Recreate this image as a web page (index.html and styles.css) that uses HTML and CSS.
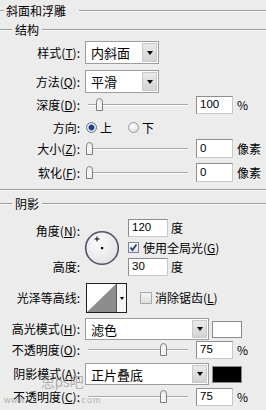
FILE: index.html
```html
<!DOCTYPE html>
<html lang="zh-CN">
<head>
<meta charset="utf-8">
<title>斜面和浮雕</title>
<link rel="stylesheet" href="styles.css">
</head>
<body>
<div class="panel">
  <div class="title"><span class="lead"></span><span class="ttl">斜面和浮雕</span><span class="etch grow tline"></span></div>
  <div class="legend"><span class="etch leadline"></span><span class="lg">结构</span><span class="etch grow"></span></div>

  <div class="row h23 m3"><span class="lbl">样式(<u>T</u>):</span><div class="select narrow"><span class="val">内斜面</span><span class="dd"><i></i></span></div></div>
  <div class="row h23 m6"><span class="lbl">方法(<u>Q</u>):</span><div class="select narrow"><span class="val">平滑</span><span class="dd"><i></i></span></div></div>

  <div class="row h18 m3"><span class="lbl">深度(<u>D</u>):</span>
    <div class="slider"><div class="rail"><span class="trackline"></span><span class="thumb" style="left:10.6%"><svg width="9" height="13" viewBox="0 0 9 13"><path d="M1.5 12.5V4.2Q1.5 0.5 4.5 0.5Q7.5 0.5 7.5 4.2V12.5Z" fill="#f2f2f2" stroke="#7c7c7c"/><path d="M2.5 11.5V4.5" stroke="#fff"/></svg></span></div></div>
    <span class="num">100</span><span class="unit">%</span></div>

  <div class="row h17 m5"><span class="lbl">方向:</span>
    <span class="radio on first"></span><span class="rtext">上</span>
    <span class="radio second"></span><span class="rtext">下</span></div>

  <div class="row h19 m3"><span class="lbl">大小(<u>Z</u>):</span>
    <div class="slider"><div class="rail"><span class="trackline"></span><span class="thumb" style="left:0%"><svg width="9" height="13" viewBox="0 0 9 13"><path d="M1.5 12.5V4.2Q1.5 0.5 4.5 0.5Q7.5 0.5 7.5 4.2V12.5Z" fill="#f2f2f2" stroke="#7c7c7c"/><path d="M2.5 11.5V4.5" stroke="#fff"/></svg></span></div></div>
    <span class="num">0</span><span class="unit">像素</span></div>
  <div class="row h19 m5"><span class="lbl">软化(<u>F</u>):</span>
    <div class="slider"><div class="rail"><span class="trackline"></span><span class="thumb" style="left:0%"><svg width="9" height="13" viewBox="0 0 9 13"><path d="M1.5 12.5V4.2Q1.5 0.5 4.5 0.5Q7.5 0.5 7.5 4.2V12.5Z" fill="#f2f2f2" stroke="#7c7c7c"/><path d="M2.5 11.5V4.5" stroke="#fff"/></svg></span></div></div>
    <span class="num">0</span><span class="unit">像素</span></div>

  <div class="etch sep"></div>

  <div class="legend shadowlg"><span class="etch leadline"></span><span class="lg">阴影</span><span class="etch grow"></span></div>

  <div class="angle">
    <span class="lbl a-r1">角度(<u>N</u>):</span>
    <div class="dial"><svg width="36" height="36" viewBox="0 0 36 36"><defs><radialGradient id="dg" cx="40%" cy="35%" r="70%"><stop offset="0" stop-color="#fbfbfb"/><stop offset="1" stop-color="#e2e2e6"/></radialGradient></defs><circle cx="18" cy="18" r="16.3" fill="url(#dg)" stroke="#4d5566" stroke-width="1.6"/><path d="M13 6.5V11.5M10.5 9H15.5" stroke="#000" stroke-width="1"/><rect x="17" y="17" width="2.2" height="2.2" fill="#000"/></svg></div>
    <div class="a-r1 a-c3"><span class="num wide">120</span><span class="unit deg">度</span></div>
    <div class="a-r2 a-c3 check"><span class="cb on"><svg width="11" height="11" viewBox="0 0 11 11"><path d="M2.5 5.5L4.5 8L8.5 2.5" fill="none" stroke="#1f3c8c" stroke-width="1.8"/></svg></span><span>使用全局光(<u>G</u>)</span></div>
    <span class="lbl a-r3">高度:</span>
    <div class="a-r3 a-c3"><span class="num wide">30</span><span class="unit deg">度</span></div>
  </div>

  <div class="row h30 m7"><span class="lbl">光泽等高线:</span>
    <div class="contour"><svg class="curve" width="29" height="28" viewBox="0 0 29 28"><rect width="29" height="28" fill="#fff"/><polygon points="0,28 29,0 29,28" fill="#8d8d8d"/></svg><span class="cdd"><i></i></span></div>
    <span class="cb plain aa"></span><span class="cbt">消除锯齿(<u>L</u>)</span></div>

  <div class="row h22 m5"><span class="lbl">高光模式(<u>H</u>):</span><div class="select wide"><span class="val">滤色</span><span class="dd"><i></i></span></div><span class="swatch white"></span></div>

  <div class="row h18 m1"><span class="lbl">不透明度(<u>O</u>):</span>
    <div class="slider"><div class="rail"><span class="trackline"></span><span class="thumb" style="left:75%"><svg width="9" height="13" viewBox="0 0 9 13"><path d="M1.5 12.5V4.2Q1.5 0.5 4.5 0.5Q7.5 0.5 7.5 4.2V12.5Z" fill="#f2f2f2" stroke="#7c7c7c"/><path d="M2.5 11.5V4.5" stroke="#fff"/></svg></span></div></div>
    <span class="num">75</span><span class="unit">%</span></div>

  <div class="row h22 m4"><span class="lbl">阴影模式(<u>A</u>):</span><div class="select wide"><span class="val">正片叠底</span><span class="dd"><i></i></span></div><span class="swatch black"></span></div>

  <div class="row h18 m3"><span class="lbl">不透明度(<u>C</u>):</span>
    <div class="slider"><div class="rail"><span class="trackline"></span><span class="thumb" style="left:75%"><svg width="9" height="13" viewBox="0 0 9 13"><path d="M1.5 12.5V4.2Q1.5 0.5 4.5 0.5Q7.5 0.5 7.5 4.2V12.5Z" fill="#f2f2f2" stroke="#7c7c7c"/><path d="M2.5 11.5V4.5" stroke="#fff"/></svg></span></div></div>
    <span class="num">75</span><span class="unit">%</span></div>

  <div class="wm wm1">思ps吧</div>
  <div class="wm wm2">www.</div>
  <div class="wm wm3">.com</div>
</div>
</body>
</html>
```
FILE: styles.css
```css
* { box-sizing: border-box; }
html, body { margin: 0; padding: 0; }
body {
  background: #ececec;
  width: 266px;
  height: 410px;
  overflow: hidden;
  font-family: "Noto Sans CJK SC", "Liberation Sans", sans-serif;
  font-size: 12px;
  line-height: 1;
  color: #000;
}
.panel { position: relative; width: 266px; height: 410px; }
u { text-decoration: underline; text-underline-offset: 1px; }

.etch { display: block; height: 2px; border-top: 1px solid #9b9b9b; border-bottom: 1px solid #fbfbfb; }
.grow { flex: 1; }

.title { display: flex; align-items: center; height: 16px; margin-top: 3px; }
.title .lead { width: 4px; height: 2px; border-top: 1px solid #9b9b9b; border-bottom: 1px solid #fbfbfb; }
.title .ttl { margin-left: 2px; }
.title .tline { margin-left: 13px; }

.legend { display: flex; align-items: center; height: 16px; margin-top: 3px; }
.legend .leadline { width: 12px; }
.legend .lg { margin: 0 3px 0 3px; }
.shadowlg { margin-top: 5px; }

.sep { margin-top: 7px; }

.row { display: flex; align-items: center; }
.h17 { height: 17px; }
.h18 { height: 18px; }
.h19 { height: 19px; }
.h22 { height: 22px; }
.h23 { height: 23px; }
.h30 { height: 30px; }
.m1 { margin-top: 1px; }
.m3 { margin-top: 3px; }
.m4 { margin-top: 4px; }
.m5 { margin-top: 5px; }
.m6 { margin-top: 6px; }
.m7 { margin-top: 7px; }

.lbl { width: 80px; text-align: right; white-space: nowrap; flex: none; }

.select {
  display: flex;
  align-items: stretch;
  height: 100%;
  margin-left: 5px;
  background: #fff;
  border: 1px solid #9d9d9d;
}
.select.narrow { width: 74px; }
.select.wide { width: 124px; }
.select .val { flex: 1; display: flex; align-items: center; padding-left: 5px; font-size: 13px; }
.dd {
  width: 15px;
  margin: 1px;
  background: linear-gradient(#e9e9e9, #d4d4d4);
  border: 1px solid #c9c9c9;
  display: flex;
  align-items: center;
  justify-content: center;
}
.dd i, .cdd i {
  display: block;
  width: 0; height: 0;
  border-left: 3.5px solid transparent;
  border-right: 3.5px solid transparent;
  border-top: 4px solid #000;
}

.slider { position: relative; width: 111px; height: 100%; margin-left: 5px; flex: none; }
.rail { position: absolute; left: 4px; width: 99px; top: 0; bottom: 0; }
.trackline {
  position: absolute; left: -1px; right: 0; top: 50%; margin-top: -1px;
  height: 2px; border-top: 1px solid #a8a8a8; border-bottom: 1px solid #fff;
}
.thumb { position: absolute; top: 50%; margin-top: -7px; margin-left: -4.5px; width: 9px; height: 13px; }
.thumb svg { display: block; }

.num {
  width: 37px;
  height: 100%;
  background: #fff;
  border: 1px solid #8d8d8d;
  border-right-color: #c8c8c8;
  border-bottom-color: #c8c8c8;
  display: flex;
  align-items: center;
  padding-left: 3px;
  font-family: "Liberation Sans", sans-serif;
  font-size: 11.5px;
  flex: none;
}
.num.wide { width: 40px; height: 18px; }
.unit { margin-left: 4px; }
.unit.deg { margin-left: 3px; }

.radio {
  width: 11px; height: 11px; border-radius: 50%;
  border: 1px solid #8f96a3;
  background: radial-gradient(circle at 40% 35%, #ffffff, #d8d8dc);
  flex: none;
}
.radio.on { background: radial-gradient(circle, #1d3f86 0 2.2px, #6f8fc8 2.8px, #e6eaf2 3.6px, #dadce2 100%); border-color: #6a7690; }
.radio.first { margin-left: 6px; }
.radio.second { margin-left: 16px; }
.rtext { margin-left: 3px; }

.angle {
  display: grid;
  grid-template-columns: 80px 48px 1fr;
  grid-template-rows: 18px 21px 18px;
  margin-top: 7px;
  align-items: center;
}
.a-r1 { grid-row: 1; }
.a-r2 { grid-row: 2; }
.a-r3 { grid-row: 3; }
.a-c3 { grid-column: 3; display: flex; align-items: center; height: 18px; }
.angle .lbl { grid-column: 1; }
.angle .lbl.a-r1 { margin-top: 6px; }
.dial { grid-column: 2; grid-row: 1 / 4; align-self: start; margin-top: 11px; margin-left: 4px; width: 36px; height: 36px; }
.dial svg { display: block; }
.check span + span { margin-left: 4px; }

.cb {
  width: 11px; height: 11px; flex: none;
  border: 1px solid #7b8496;
  background: linear-gradient(#ffffff, #e4e4e4);
}
.cb svg { display: block; margin: -1px; }
.cb.plain { width: 12px; height: 12px; border-color: #a9a9a9; background: linear-gradient(#f4f4f4, #dedede); }
.cb.aa { margin-left: 13px; }
.cbt { margin-left: 3px; }

.contour {
  display: flex;
  width: 41px;
  height: 30px;
  margin-left: 6px;
  border: 1px solid #1e1e1e;
  background: #fff;
}
.curve { display: block; }
.cdd {
  flex: 1;
  border-left: 1px solid #555;
  background: #f6f6f6;
  display: flex;
  align-items: center;
  justify-content: center;
}
.cdd i { border-left-width: 2.5px; border-right-width: 2.5px; border-top-width: 3px; }

.swatch { width: 30px; height: 17px; margin-left: 3px; border: 1px solid #8a8a8a; flex: none; }
.swatch.white { background: #fff; }
.swatch.black { background: #000; }

.wm { position: absolute; color: rgba(120, 120, 120, 0.55); font-family: "Liberation Sans", "Noto Sans CJK SC", sans-serif; }
.wm1 { left: 41px; top: 372px; font-size: 14px; }
.wm2 { left: 4px; top: 393px; font-size: 9px; letter-spacing: 0.5px; }
.wm3 { left: 78px; top: 393px; font-size: 9px; letter-spacing: 1px; }
```
